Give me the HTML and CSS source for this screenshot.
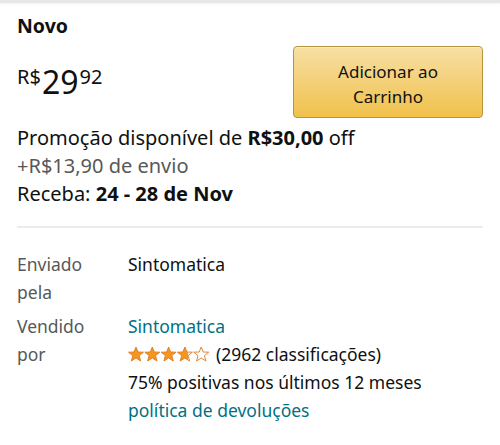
FILE: index.html
```html
<!DOCTYPE html>
<html lang="pt">
<head>
<meta charset="utf-8">
<link rel="stylesheet" href="styles.css">
</head>
<body>
<div class="topbar"></div>
<main class="offer">
  <h2 class="condition">Novo</h2>
  <div class="buyrow">
    <div class="price"><span class="cur">R$</span><span class="whole">29</span><span class="frac">92</span></div>
    <button class="cart">Adicionar ao<br>Carrinho</button>
  </div>
  <div class="promo">Promoção disponível de <b>R$30,00</b> off</div>
  <div class="ship">+R$13,90 de envio</div>
  <div class="deliv">Receba: <b>24 - 28 de Nov</b></div>
  <hr class="divider">
  <div class="details">
    <div class="label">Enviado<br>pela</div>
    <div class="value">Sintomatica</div>
    <div class="label">Vendido<br>por</div>
    <div class="value">
      <a class="link">Sintomatica</a>
      <div class="rating">
        <span class="stars">
          <svg width="82" height="16" viewBox="0 0 82 16">
            <defs>
              <linearGradient id="part"><stop offset="72%" stop-color="#f5961d"/><stop offset="72%" stop-color="#fff"/></linearGradient>
            </defs>
            <g stroke="#de7921" stroke-width="0.9" stroke-linejoin="round">
              <polygon fill="#f5961d" points="8,1 10,6 15.5,6.2 11.2,9.6 12.7,15 8,12 3.3,15 4.8,9.6 0.5,6.2 6,6"/>
              <polygon fill="#f5961d" transform="translate(16.3 0)" points="8,1 10,6 15.5,6.2 11.2,9.6 12.7,15 8,12 3.3,15 4.8,9.6 0.5,6.2 6,6"/>
              <polygon fill="#f5961d" transform="translate(32.6 0)" points="8,1 10,6 15.5,6.2 11.2,9.6 12.7,15 8,12 3.3,15 4.8,9.6 0.5,6.2 6,6"/>
              <polygon fill="url(#part)" transform="translate(48.9 0)" points="8,1 10,6 15.5,6.2 11.2,9.6 12.7,15 8,12 3.3,15 4.8,9.6 0.5,6.2 6,6"/>
              <polygon fill="#fff" transform="translate(65.2 0)" points="8,1 10,6 15.5,6.2 11.2,9.6 12.7,15 8,12 3.3,15 4.8,9.6 0.5,6.2 6,6"/>
            </g>
          </svg>
        </span>
        <span>(2962 classificações)</span>
      </div>
      <div>75% positivas nos últimos 12 meses</div>
      <a class="link">política de devoluções</a>
    </div>
  </div>
</main>
</body>
</html>
```
FILE: styles.css
```css
html, body {
  margin: 0;
  padding: 0;
  background: #fff;
}
body {
  font-family: "Noto Sans", "Open Sans", sans-serif;
  color: #0f1111;
  width: 500px;
}
.topbar {
  height: 3px;
  background: #e7e7e7;
  box-shadow: 0 1px 3px rgba(0,0,0,0.06);
}
.offer {
  padding: 0 17px;
}
.condition {
  margin: 0;
  padding-top: 10px;
  font-size: 19.5px;
  font-weight: 700;
  line-height: 26px;
}
.buyrow {
  display: flex;
  justify-content: space-between;
  align-items: flex-start;
  margin-top: 7px;
}
.price {
  display: flex;
  align-items: flex-start;
  margin-top: 20px;
  line-height: 1;
}
.cur {
  font-size: 20px;
  margin-top: 1px;
  margin-right: 1px;
}
.whole {
  font-size: 32px;
  margin-right: 1px;
}
.frac {
  font-size: 20px;
  margin-top: 1px;
}
.cart {
  width: 190px;
  height: 72px;
  border: 1px solid #b89441;
  border-radius: 4px;
  background: linear-gradient(#f7dfa5, #f0c14b);
  box-shadow: 0 1px 0 rgba(255,255,255,0.4) inset;
  font-family: inherit;
  font-size: 17px;
  line-height: 25px;
  color: #111;
  padding: 4px 0 0;
}
.promo, .ship, .deliv {
  font-size: 20px;
  line-height: 28px;
}
.promo {
  margin-top: 6px;
}
.ship {
  color: #565959;
}
.divider {
  border: 0;
  height: 2px;
  background: #ececec;
  margin: 18px 0 0;
}
.details {
  display: grid;
  grid-template-columns: 111px 1fr;
  row-gap: 6px;
  padding-top: 22px;
  font-size: 17.5px;
  line-height: 28px;
}
.label {
  color: #565959;
}
.link {
  display: block;
  color: #007185;
}
.rating {
  display: flex;
  align-items: center;
  gap: 6px;
}
.stars {
  display: flex;
}
```
